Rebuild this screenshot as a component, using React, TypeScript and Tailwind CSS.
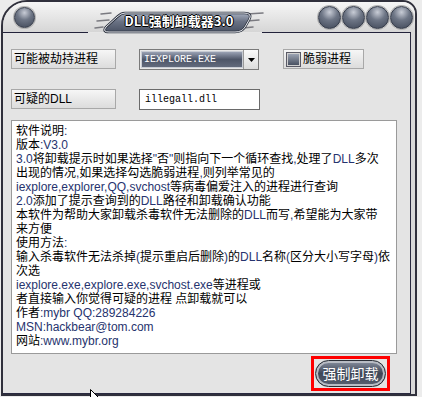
import React from "react";

const lines = [
  "软件说明:",
  "版本:V3.0",
  "3.0将卸载提示时如果选择\"否\"则指向下一个循环查找,处理了DLL多次",
  "出现的情况,如果选择勾选脆弱进程,则列举常见的",
  "iexplore,explorer,QQ,svchost等病毒偏爱注入的进程进行查询",
  "2.0添加了提示查询到的DLL路径和卸载确认功能",
  "本软件为帮助大家卸载杀毒软件无法删除的DLL而写,希望能为大家带",
  "来方便",
  "使用方法:",
  "输入杀毒软件无法杀掉(提示重启后删除)的DLL名称(区分大小写字母)依",
  "次选",
  "iexplore.exe,explore.exe,svchost.exe等进程或",
  "者直接输入你觉得可疑的进程 点卸载就可以",
  "作者:mybr QQ:289284226",
  "MSN:hackbear@tom.com",
  "网站:www.mybr.org",
];

// ascii parts render a bit blue in the original
function Line({ text }: { text: string }) {
  const parts = text.split(/([\x21-\x7E][\x20-\x7E]*)/);
  return (
    <div className="h-[14px] whitespace-nowrap">
      {parts.map((p, i) =>
        /^[\x20-\x7E]+$/.test(p) && p.trim() ? (
          <span key={i} className="text-[#26336e]">{p}</span>
        ) : (
          <span key={i}>{p}</span>
        )
      )}
    </div>
  );
}

function Knob({ size }: { size: string }) {
  return (
    <div
      className={`${size} rounded-full border border-[#363c4a] bg-[radial-gradient(circle_at_50%_25%,#c8ccd6_0%,#6e7686_42%,#3e4656_100%)] shadow-[0_0_0_1px_#b4b4b4]`}
    />
  );
}

function TitlePill() {
  return (
    <div className="absolute left-[84px] top-[2px] w-[184px] h-[30px]">
      <svg width="184" height="30" viewBox="0 0 184 30" className="absolute inset-0">
        <defs>
          <linearGradient id="pill" x1="0" y1="0" x2="0" y2="1">
            <stop offset="0" stopColor="#a8b0c0" />
            <stop offset="0.45" stopColor="#6a7284" />
            <stop offset="1" stopColor="#4a5264" />
          </linearGradient>
        </defs>
        {/* dashes */}
        <g stroke="#7a7a80" strokeWidth="1.5" strokeLinecap="round">
          <line x1="14" y1="10" x2="24" y2="9" />
          <line x1="10" y1="17" x2="22" y2="16" />
          <line x1="8" y1="24" x2="16" y2="23" />
          <line x1="160" y1="10" x2="176" y2="9" />
          <line x1="160" y1="17" x2="172" y2="16" />
          <line x1="156" y1="24" x2="166" y2="23" />
        </g>
        <path
          d="M38 9 L157 9 Q166 9 162 16 L158 23 Q155 28 148 28 L22 28 Q15 28 19 23 L30 13 Q34 9 38 9 Z"
          fill="url(#pill)"
          stroke="#2e3440"
          strokeWidth="2.5"
        />
        <path
          d="M38 9 L157 9 Q166 9 162 16 L158 23 Q155 28 148 28 L22 28 Q15 28 19 23 L30 13 Q34 9 38 9 Z"
          fill="none"
          stroke="#e8eaf0"
          strokeWidth="1"
        />
      </svg>
      <span className="absolute inset-0 flex items-center justify-center pt-[3px] text-[13px] font-bold text-white font-['Noto_Sans_CJK_SC',sans-serif] [text-shadow:1px_0_0_#000,-1px_0_0_#000,0_1px_0_#000,0_-1px_0_#000]">
        DLL强制卸载器3.0
      </span>
    </div>
  );
}

export default function App() {
  const ui = "font-['Liberation_Sans','Noto_Sans_CJK_SC',sans-serif]";
  return (
    <div className={`relative w-[422px] h-[397px] overflow-hidden bg-[#ececec] ${ui}`}>
      <div className="ml-[1px] w-[416px] h-[396px] flex flex-col border-2 border-[#30303c] rounded-tl-[26px] rounded-tr-[14px] overflow-hidden bg-[#d8d8d8]">
        {/* title bar */}
        <div className="relative h-[30px] flex items-center bg-gradient-to-b from-[#f6f6f6] to-[#d6d6d6]">
          <div className="ml-[11px]">
            <Knob size="w-[21px] h-[21px]" />
          </div>
          <div className="ml-auto mr-[2px] flex gap-[1px]">
            <Knob size="w-[23px] h-[23px]" />
            <Knob size="w-[23px] h-[23px]" />
            <Knob size="w-[23px] h-[23px]" />
            <Knob size="w-[23px] h-[23px]" />
          </div>
          <TitlePill />
        </div>
        <div className="flex h-[1px] mr-[4px]">
          <div className="w-[85px] bg-[#22223a]" />
          <div className="w-[174px] bg-[#e6e6e6]" />
          <div className="flex-1 bg-[#22223a]" />
        </div>

        {/* body */}
        <div className="flex-1 mr-[4px] border-r border-b border-[#2a2a40] bg-[#e4e4e4] pl-[8px] pt-[16px] flex flex-col text-[12px] text-black">
          <div className="flex items-start">
            <div className="w-[105px] h-[20px] border border-[#a8a8a8] bg-gradient-to-b from-[#f6f6f6] to-[#dcdcdc] pl-[2px] text-[12px] leading-[18px]">
              可能被劫持进程
            </div>
            <div className="ml-[23px] w-[120px] h-[21px] flex border border-[#7a7a7a] bg-[#e8e8e8]">
              <div className="flex-1 m-[1px] mr-0 border border-[#c8ccd4] bg-gradient-to-b from-[#9aa2b4] via-[#4e5668] to-[#626a7c] pl-[2px] font-['Liberation_Mono',monospace] text-[10px] leading-[15px] text-white">
                IEXPLORE.EXE
              </div>
              <div className="w-[15px] flex items-center justify-center border-l border-[#9a9a9a] bg-gradient-to-b from-[#fafafa] to-[#dcdcdc]">
                <svg width="7" height="4" viewBox="0 0 7 4">
                  <path d="M0 0 H7 L3.5 4 Z" fill="#000" />
                </svg>
              </div>
            </div>
            <div className="ml-[24px] w-[81px] h-[20px] flex items-center border border-[#a8a8a8] bg-gradient-to-b from-[#f6f6f6] to-[#dcdcdc]">
              <div className="ml-[3px] w-[13px] h-[13px] border border-[#d0d0d0] outline outline-1 outline-[#5a5a66] bg-gradient-to-b from-[#9ca4b4] to-[#4a5262]" />
              <span className="ml-[3px] text-[12px] leading-[18px]">脆弱进程</span>
            </div>
          </div>

          <div className="mt-[19px] flex items-start">
            <div className="w-[105px] h-[20px] border border-[#a8a8a8] bg-gradient-to-b from-[#f6f6f6] to-[#dcdcdc] pl-[2px] text-[12px] leading-[18px]">
              可疑的DLL
            </div>
            <div className="ml-[23px] w-[121px] h-[21px] border border-[#6a6a6a] bg-white pl-[5px] font-['Liberation_Mono',monospace] text-[10px] leading-[19px] text-black">
              illegall.dll
            </div>
          </div>

          <div className="mt-[10px] w-[386px] h-[234px] border border-[#9a9a9a] bg-white pl-[4px] pt-[3px] text-[12px] leading-[14px]">
            {lines.map((l, i) => (
              <Line key={i} text={l} />
            ))}
          </div>

          <div className="mt-[2px] ml-[300px] w-[79px] h-[35px] border-[3px] border-[#ff0000] p-[1px] flex">
            <div className="flex-1 rounded-full border border-[#2a2e36] shadow-[inset_0_0_0_2px_#b8bcc4] bg-gradient-to-b from-[#8a92a2] via-[#3e4656] to-[#5a6272] flex items-center justify-center text-white text-[14px] font-['Noto_Sans_CJK_SC',sans-serif]">
              强制卸载
            </div>
          </div>
        </div>
      </div>
      {/* mouse cursor */}
      <svg className="absolute left-[90px] top-[389px]" width="12" height="10" viewBox="0 0 12 10">
        <path d="M0.5 0.5 L0.5 12 L3.5 9 L9 9 Z" fill="#fff" stroke="#000" strokeWidth="1" />
      </svg>
    </div>
  );
}
